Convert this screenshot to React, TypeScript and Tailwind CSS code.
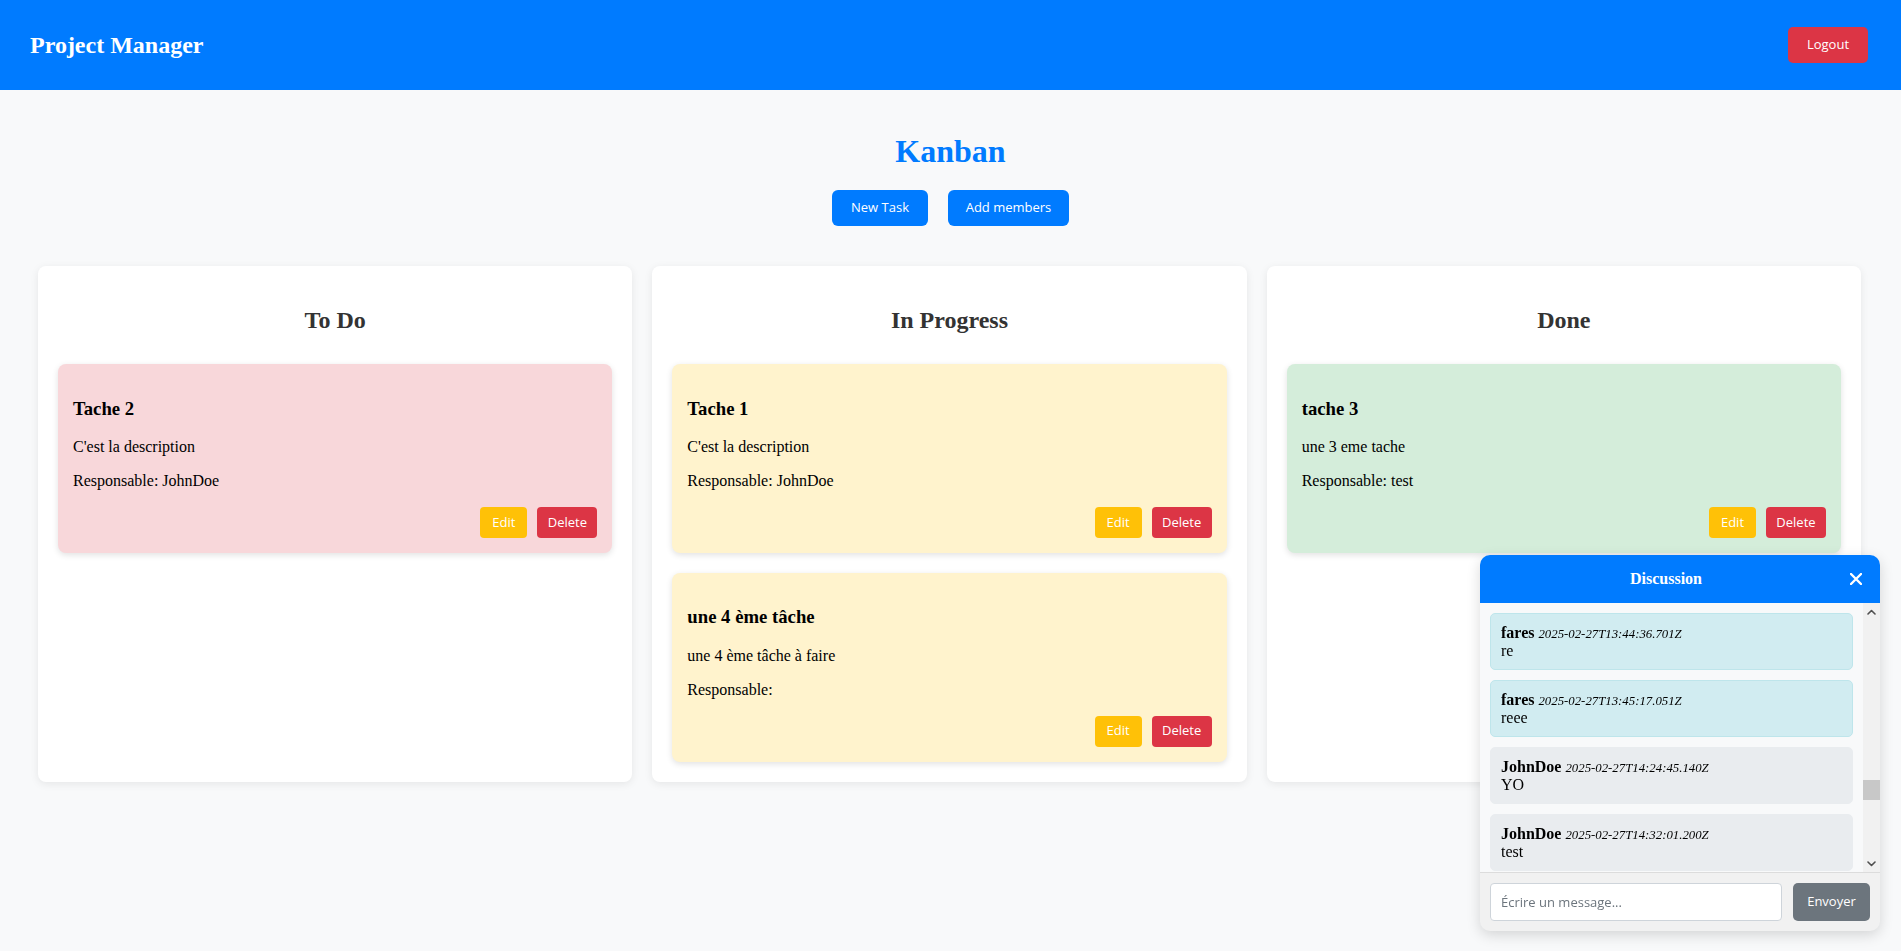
import React from 'react';

type Task = {
  title: string;
  description: string;
  owner: string;
};

type Column = {
  name: string;
  tone: string;
  tasks: Task[];
};

type Message = {
  author: string;
  at: string;
  text: string;
  mine: boolean;
};

const columns: Column[] = [
  {
    name: 'To Do',
    tone: 'bg-[#f8d7da]',
    tasks: [{ title: 'Tache 2', description: "C'est la description", owner: 'JohnDoe' }],
  },
  {
    name: 'In Progress',
    tone: 'bg-[#fff3cd]',
    tasks: [
      { title: 'Tache 1', description: "C'est la description", owner: 'JohnDoe' },
      { title: 'une 4 ème tâche', description: 'une 4 ème tâche à faire', owner: '' },
    ],
  },
  {
    name: 'Done',
    tone: 'bg-[#d4edda]',
    tasks: [{ title: 'tache 3', description: 'une 3 eme tache', owner: 'test' }],
  },
];

const messages: Message[] = [
  { author: 'fares', at: '2025-02-27T13:44:36.701Z', text: 're', mine: true },
  { author: 'fares', at: '2025-02-27T13:45:17.051Z', text: 'reee', mine: true },
  { author: 'JohnDoe', at: '2025-02-27T14:24:45.140Z', text: 'YO', mine: false },
  { author: 'JohnDoe', at: '2025-02-27T14:32:01.200Z', text: 'test', mine: false },
];

const sans = "font-['Open_Sans','Noto_Sans',sans-serif]";

function TaskCard({ task, tone }: { task: Task; tone: string }) {
  return (
    <div className={`${tone} rounded-[8px] p-[15px] shadow-[0_2px_6px_rgba(0,0,0,0.12)] mb-[20px] last:mb-0`}>
      <h3 className="text-[18.72px] leading-[21.5px] font-bold my-[18.72px] text-black">{task.title}</h3>
      <p className="text-[16px] leading-[18.4px] mb-[16px] text-black">{task.description}</p>
      <p className="text-[16px] leading-[18.4px] mb-[16px] text-black">Responsable: {task.owner}</p>
      <div className={`flex justify-end gap-[10px] ${sans}`}>
        <button className="w-[47px] h-[31px] rounded-[4px] bg-[#ffc107] text-white text-[13px]">Edit</button>
        <button className="w-[60px] h-[31px] rounded-[4px] bg-[#dc3545] text-white text-[13px]">Delete</button>
      </div>
    </div>
  );
}

function BoardColumn({ column }: { column: Column }) {
  return (
    <section className="flex-1 min-w-0 bg-white rounded-[8px] p-[20px] shadow-[0_2px_8px_rgba(0,0,0,0.08)]">
      <h2 className="text-center text-[24px] leading-[28px] font-bold text-[#333] mt-[20px] mb-[30px]">
        {column.name}
      </h2>
      {column.tasks.map((t) => (
        <TaskCard key={t.title} task={t} tone={column.tone} />
      ))}
    </section>
  );
}

function Chevron({ up }: { up: boolean }) {
  return (
    <svg width="9" height="6" viewBox="0 0 9 6" fill="none">
      <polyline
        points={up ? '1,5 4.5,1.5 8,5' : '1,1 4.5,4.5 8,1'}
        stroke="#505050"
        strokeWidth="1.6"
        strokeLinecap="round"
        strokeLinejoin="round"
      />
    </svg>
  );
}

function ChatPanel() {
  return (
    <div className="fixed right-[21px] bottom-[20px] w-[400px] rounded-[10px] overflow-hidden bg-[#f1f1f1] shadow-[0_4px_14px_rgba(0,0,0,0.15)]">
      <div className="h-[48px] bg-[#007bff] flex items-center pl-[15px] pr-[18px]">
        <h4 className="flex-1 text-center text-[16px] font-bold text-white">Discussion</h4>
        <button className="ml-[13px] w-[12px] h-[12px] flex items-center justify-center">
          <svg width="12" height="12" viewBox="0 0 12 12">
            <path d="M1 1 L11 11 M11 1 L1 11" stroke="white" strokeWidth="2.4" strokeLinecap="round" />
          </svg>
        </button>
      </div>
      <div className="h-[270px] flex bg-[#f8f9fa] border-b border-[#dcdcdc]">
        <div className="flex-1 overflow-hidden pt-[10px] px-[10px]">
          {messages.map((m, i) => (
            <div
              key={i}
              className={`mb-[10px] rounded-[5px] border p-[10px] text-[16px] leading-[17.5px] text-black ${
                m.mine ? 'bg-[#d1ecf1] border-[#bee5eb]' : 'bg-[#e9ecef] border-[#e9ecef]'
              }`}
            >
              <div className="h-[17.5px]">
                <strong>{m.author}</strong>{' '}
                <small className="text-[12.8px] leading-none">
                  <em>{m.at}</em>
                </small>
              </div>
              <div className="h-[17.5px]">{m.text}</div>
            </div>
          ))}
        </div>
        <div className="w-[17px] bg-[#f1f1f1] flex flex-col">
          <div className="h-[17px] flex items-center justify-center">
            <Chevron up />
          </div>
          <div className="flex-1">
            <div className="h-[160px]" />
            <div className="h-[20px] bg-[#c8c8c8]" />
          </div>
          <div className="h-[17px] flex items-center justify-center">
            <Chevron up={false} />
          </div>
        </div>
      </div>
      <div className={`flex gap-[11px] p-[10px] ${sans}`}>
        <input
          className="flex-1 min-w-0 h-[38px] rounded-[4px] border border-[#ced4da] bg-white px-[10px] text-[13px] placeholder:text-[#6c757d] outline-none"
          placeholder="Écrire un message..."
        />
        <button className="w-[77px] h-[38px] rounded-[5px] bg-[#6c757d] text-white text-[13px]">Envoyer</button>
      </div>
    </div>
  );
}

export default function App() {
  return (
    <div className="min-h-screen bg-[#f8f9fa] font-['Liberation_Serif','Times_New_Roman',serif]">
      <header className="h-[90px] bg-[#007bff] flex items-center justify-between pl-[30px] pr-[33px]">
        <h1 className="text-[24px] leading-[28px] font-bold text-white">Project Manager</h1>
        <button className={`w-[80px] h-[36px] rounded-[5px] bg-[#dc3545] text-white text-[13px] ${sans}`}>
          Logout
        </button>
      </header>

      <main className="pb-[40px]">
        <h1 className="mt-[43px] text-center text-[32px] leading-[37px] font-bold text-[#007bff]">Kanban</h1>
        <div className={`mt-[20px] flex justify-center gap-[20px] ${sans}`}>
          <button className="w-[96px] h-[36px] rounded-[6px] bg-[#007bff] text-white text-[13px] font-medium">
            New Task
          </button>
          <button className="w-[121px] h-[36px] rounded-[6px] bg-[#007bff] text-white text-[13px] font-medium">
            Add members
          </button>
        </div>
        <div className="mt-[40px] flex gap-[20px] pl-[38px] pr-[40px]">
          {columns.map((c) => (
            <BoardColumn key={c.name} column={c} />
          ))}
        </div>
      </main>

      <ChatPanel />
    </div>
  );
}
